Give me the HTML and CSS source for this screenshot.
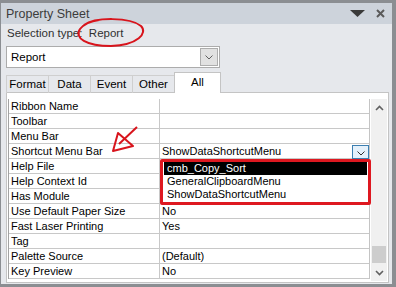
FILE: index.html
```html
<!DOCTYPE html>
<html lang="en">
<head>
	<meta charset="UTF-8">
	<title>Property Sheet</title>
	<link rel="stylesheet" href="styles.css">
</head>
<body>
	<div class="window">
		<div class="titlebar">
			<span>Property Sheet</span>
			<span class="tb_icons">
				<svg width="15" height="8" viewBox="0 0 15 8"><polygon points="0,0 15,0 7.5,7" fill="#3a3a3a"/></svg>
				<svg width="9" height="9" viewBox="0 0 9 9"><path d="M1 1 L8 8 M8 1 L1 8" stroke="#5a5a5a" stroke-width="2"/></svg>
			</span>
		</div>
		<div class="seltype">Selection type:&nbsp; Report</div>
		<div class="combo">
			<span class="combo_text">Report</span>
			<span class="combo_btn"><svg width="8" height="5" viewBox="0 0 8 5"><path d="M0.5 0.5 L4 4 L7.5 0.5" stroke="#606060" fill="none"/></svg></span>
		</div>
		<div class="tabs">
			<div class="tab">Format</div>
			<div class="tab">Data</div>
			<div class="tab">Event</div>
			<div class="tab">Other</div>
			<div class="tab active">All</div>
		</div>
		<div class="panel">
			<div class="grid">
				<div class="row"><div class="label">Ribbon Name</div><div class="value"></div></div>
				<div class="row"><div class="label">Toolbar</div><div class="value"></div></div>
				<div class="row"><div class="label">Menu Bar</div><div class="value"></div></div>
				<div class="row"><div class="label">Shortcut Menu Bar</div><div class="value">ShowDataShortcutMenu<span class="val_btn"><svg width="8" height="5" viewBox="0 0 8 5"><path d="M0.5 0.5 L4 4 L7.5 0.5" stroke="#303030" fill="none"/></svg></span></div></div>
				<div class="row"><div class="label">Help File</div><div class="value"></div></div>
				<div class="row"><div class="label">Help Context Id</div><div class="value"></div></div>
				<div class="row"><div class="label">Has Module</div><div class="value"></div></div>
				<div class="row"><div class="label">Use Default Paper Size</div><div class="value">No</div></div>
				<div class="row"><div class="label">Fast Laser Printing</div><div class="value">Yes</div></div>
				<div class="row"><div class="label">Tag</div><div class="value"></div></div>
				<div class="row"><div class="label">Palette Source</div><div class="value">(Default)</div></div>
				<div class="row"><div class="label">Key Preview</div><div class="value">No</div></div>
			</div>
			<div class="scrollbar">
				<div class="sb_arrow"><svg width="9" height="6" viewBox="0 0 9 6"><path d="M1 5 L4.5 1.5 L8 5" stroke="#606060" stroke-width="1.6" fill="none"/></svg></div>
				<div class="sb_track"><div class="sb_thumb"></div></div>
				<div class="sb_arrow"><svg width="9" height="6" viewBox="0 0 9 6"><path d="M1 1 L4.5 4.5 L8 1" stroke="#606060" stroke-width="1.6" fill="none"/></svg></div>
			</div>
		</div>
	</div>

	<div class="droplist">
		<div class="item selected">cmb_Copy_Sort</div>
		<div class="item">GeneralClipboardMenu</div>
		<div class="item">ShowDataShortcutMenu</div>
	</div>

	<svg class="marks" width="396" height="287" viewBox="0 0 396 287">
		<path d="M84 25 C95 17 130 17 141 26 C148 33 138 45 111 46 C86 46 74 38 80 29 C84 24 92 21 99 20" stroke="#d8141c" stroke-width="2" fill="none"/>
		<path d="M137 127 L119 144" stroke="#d8141c" stroke-width="2" fill="none"/>
		<path d="M113 151 L118 133 L133 146 Z" stroke="#d8141c" stroke-width="2" fill="none" stroke-linejoin="round"/>
	</svg>
</body>
</html>
```

FILE: styles.css
```css
html{
	font-family: "Liberation Sans", Arial, sans-serif;
	font-size: 11px;
}
body{
	margin: 0;
	padding: 0;
	width: 396px;
	height: 287px;
	overflow: hidden;
	position: relative;
}
.window {
	box-sizing: border-box;
	width: 396px;
	height: 287px;
	background: #e6e8ec;
	border-style: solid;
	border-color: #8b8e92;
	border-width: 3px 4px 3px 1px;
	display: flex;
	flex-flow: column nowrap;
}
.titlebar {
	height: 21px;
	flex: none;
	background: #cdd3db;
	color: #3c3c3c;
	font-size: 12.5px;
	display: flex;
	justify-content: space-between;
	align-items: center;
	padding: 0 7px 0 5px;
}
.tb_icons {
	display: flex;
	align-items: center;
	gap: 11px;
}
.seltype {
	height: 21px;
	flex: none;
	line-height: 19px;
	padding-left: 6px;
	font-size: 11.5px;
	color: #303030;
}
.combo {
	box-sizing: border-box;
	flex: none;
	margin: 1px 0 0 5px;
	width: 214px;
	height: 22px;
	background: white;
	border: 1px solid #acacac;
	display: flex;
	justify-content: space-between;
	align-items: center;
	padding: 0 1px 0 4px;
	font-size: 11.5px;
	color: black;
}
.combo_btn {
	box-sizing: border-box;
	width: 18px;
	height: 18px;
	background: #e1e1e1;
	border: 1px solid #adadad;
	display: flex;
	justify-content: center;
	align-items: center;
}
.tabs {
	flex: none;
	display: flex;
	align-items: flex-end;
	height: 21px;
	margin: 4px 0 0 5px;
	position: relative;
	z-index: 2;
	font-size: 11.5px;
}
.tab {
	box-sizing: border-box;
	height: 18px;
	width: 43px;
	border: 1px solid #cfcfcf;
	border-bottom: none;
	margin-right: -1px;
	text-align: center;
	line-height: 17px;
	color: black;
}
.tab.active {
	height: 21px;
	width: 47px;
	background: white;
	border-color: #c4c4c4;
	line-height: 19px;
}
.panel {
	flex: 1;
	margin: -1px 3px 1px 5px;
	background: white;
	border: 1px solid #c4c4c4;
	padding: 6px 1px 1px 1px;
	display: flex;
	align-items: flex-start;
	gap: 1px;
}
.grid {
	width: 361px;
	border-left: 1px solid #a3a3a3;
	border-right: 1px solid #c4c4c4;
}
.row {
	display: grid;
	grid-template-columns: 151px 1fr;
	height: 15px;
	box-sizing: border-box;
	border-bottom: 1px solid #c8c8c8;
	line-height: 14px;
	color: black;
}
.label {
	padding-left: 2px;
	border-right: 1px solid #c8c8c8;
	white-space: nowrap;
}
.value {
	padding-left: 2px;
	display: flex;
	justify-content: space-between;
	white-space: nowrap;
}
.val_btn {
	box-sizing: border-box;
	width: 17px;
	height: 14px;
	margin-top: 1px;
	border: 1px solid #3c7fb1;
	background: #e5f1fb;
	display: flex;
	justify-content: center;
	align-items: flex-end;
	padding-bottom: 2px;
}
.scrollbar {
	width: 16px;
	height: 182px;
	background: #f0f0f0;
	display: flex;
	flex-flow: column nowrap;
}
.sb_arrow {
	height: 17px;
	display: flex;
	justify-content: center;
	align-items: center;
}
.sb_track {
	flex: 1;
	display: flex;
	flex-flow: column nowrap;
	justify-content: flex-end;
	padding-bottom: 1px;
}
.sb_thumb {
	height: 17px;
	margin: 0 1px;
	background: #cdcdcd;
}
.droplist {
	position: absolute;
	left: 160px;
	top: 159px;
	width: 211px;
	box-sizing: border-box;
	border: 3px solid #de1820;
	border-radius: 2px;
	background: white;
	padding: 0 1px 1px 1px;
}
.item {
	height: 13px;
	line-height: 13px;
	padding-left: 3px;
	color: black;
	white-space: nowrap;
}
.item.selected {
	background: black;
	color: white;
}
.marks {
	position: absolute;
	left: 0;
	top: 0;
	pointer-events: none;
}
```
